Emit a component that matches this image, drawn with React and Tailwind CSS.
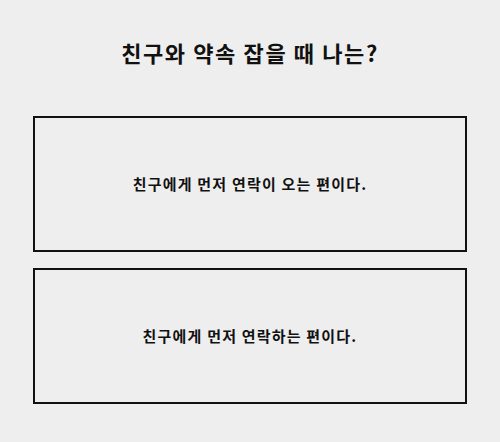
import React from 'react';

const choices = [
  '친구에게 먼저 연락이 오는 편이다.',
  '친구에게 먼저 연락하는 편이다.',
];

const App = () => {
  return (
    <div className="min-h-[442px] bg-[#eeeeee] px-[33px] pt-[36px] font-['Noto_Sans_CJK_KR',sans-serif] text-[#111111]">
      <h1 className="text-center text-[22px] font-bold leading-[32px] tracking-[1.6px]">친구와 약속 잡을 때 나는?</h1>
      <div className="mt-[48px] flex flex-col gap-4">
        {choices.map((choice) => (
          <button
            key={choice}
            type="button"
            className="flex h-[136px] w-full items-center justify-center border-2 border-[#111111] bg-transparent text-[15px] font-semibold tracking-[1.2px]"
          >
            {choice}
          </button>
        ))}
      </div>
    </div>
  );
};

export default App;
